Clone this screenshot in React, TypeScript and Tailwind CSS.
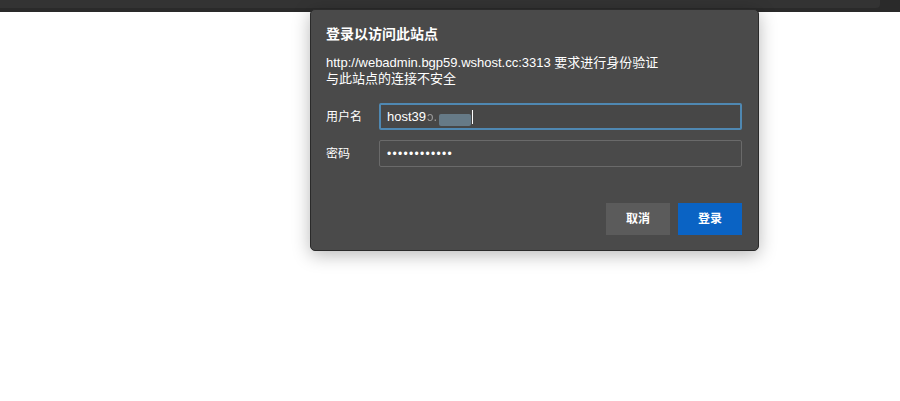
import React from "react"

export default function App() {
  return (
    <div
      className="relative h-[401px] w-[900px] overflow-hidden bg-white"
      style={{ fontFamily: '"Liberation Sans", "Noto Sans CJK SC", sans-serif' }}
    >
      {/* browser chrome strip */}
      <div className="h-[12px] w-full bg-[#2a2a2a] pr-[20px]">
        <div className="h-[8px] w-full rounded-br-[4px] bg-[#333333]" />
      </div>

      {/* auth dialog */}
      <div className="absolute left-[310px] top-[9px] w-[449px] rounded-[5px] border border-[#2a2a2a] bg-[#4a4a4a] pb-[15px] pl-[15px] pr-[16px] pt-[13px] text-white shadow-[0_4px_18px_rgba(0,0,0,0.28)]">
        <h1 className="text-[14px] font-bold leading-[22px]">登录以访问此站点</h1>
        <div className="mt-[10px] text-[13px] leading-[16px]">
          <p>http://webadmin.bgp59.wshost.cc:3313 要求进行身份验证</p>
          <p>与此站点的连接不安全</p>
        </div>

        <div className="mt-[16px] flex flex-col gap-[10px]">
          <div className="flex items-center">
            <span className="w-[53px] text-[12px]">用户名</span>
            <div className="flex h-[27px] flex-1 items-center rounded-[2px] border-2 border-[#4f88b2] bg-[#474747] px-[6px] text-[13px]">
              <span>host39</span>
              <span className="ml-[1px] text-[#9a9a9a] blur-[0.6px]">ɔ.</span>
              <span className="ml-[2px] mt-[6px] h-[12px] w-[32px] rounded-[2px] bg-[#667a87] blur-[0.6px]" />
              <span className="ml-[1px] h-[14px] w-[1px] bg-white" />
            </div>
          </div>
          <div className="flex items-center">
            <span className="w-[53px] text-[12px]">密码</span>
            <div className="flex h-[27px] flex-1 items-center rounded-[2px] border border-[#6a6a6a] bg-[#4a4a4a] px-[7px] text-[12px] tracking-[1.3px]">
              ••••••••••••
            </div>
          </div>
        </div>

        <div className="mt-[36px] flex justify-end gap-[8px]">
          <button className="h-[32px] w-[64px] bg-[#5b5b5b] text-[12px] font-bold text-white">取消</button>
          <button className="h-[32px] w-[64px] bg-[#0a63c4] text-[12px] font-bold text-white">登录</button>
        </div>
      </div>
    </div>
  )
}
